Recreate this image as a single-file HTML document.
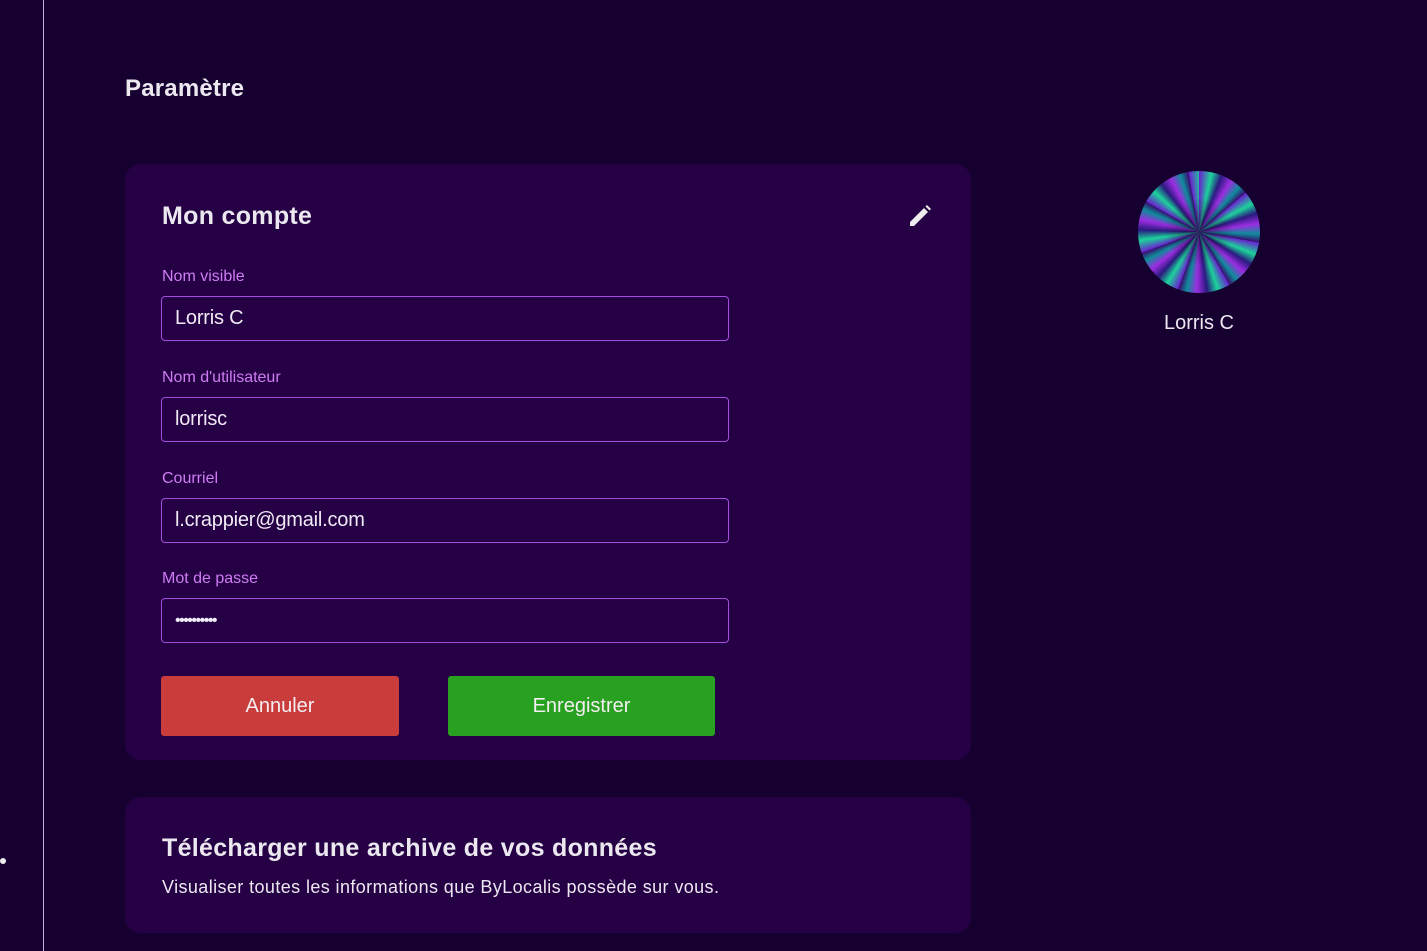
<!DOCTYPE html>
<html><head><meta charset="utf-8"><style>
*{box-sizing:border-box;margin:0;padding:0}
body{width:1427px;height:951px;background:#150030;font-family:"Liberation Sans",Arial,sans-serif;position:relative;overflow:hidden;color:#eee}
.line{position:absolute;left:43px;top:0;width:1px;height:951px;background:#c9a6e6}
.dot{position:absolute;left:0;top:858px;width:6px;height:6px;border-radius:50%;background:#eee}
h1{position:absolute;left:125px;top:75px;font-size:24px;font-weight:bold;color:#ece8f0;letter-spacing:0.2px}
.card{position:absolute;left:125px;background:#250045;border-radius:16px;width:846px}
.c1{top:164px;height:596px}
.c2{top:797px;height:136px}
h2{position:absolute;left:37px;font-size:25px;font-weight:bold;color:#ece8f0;letter-spacing:0.3px}
label{position:absolute;left:37px;font-size:16px;color:#d07cf5}
.in{position:absolute;left:36px;width:568px;height:45px;border:1px solid #a44be0;border-radius:4px;font-size:20px;padding:0 13px;line-height:43px;color:#f0eaf4;letter-spacing:-0.2px}
.btn{position:absolute;top:512px;height:60px;border-radius:3px;font-size:20px;color:#f4eef2;text-align:center;line-height:60px}
.av{position:absolute;left:1138px;top:171px;width:122px;height:122px;border-radius:50%;
background:repeating-conic-gradient(from 0deg at 50% 50%,#6a1fd0 0deg,#1bd39a 12deg,#2a1a80 22deg,#9b2ce0 32deg,#0e8c9a 42deg,#3a0b70 50deg)}
.av:after{content:"";position:absolute;inset:0;border-radius:50%;background:radial-gradient(circle,rgba(20,0,40,.6) 0,rgba(20,0,40,0) 40%)}
</style></head><body>
<div class="line"></div><div class="dot"></div>
<h1>Paramètre</h1>
<div class="card c1">
<h2 style="top:38px">Mon compte</h2>
<svg style="position:absolute;left:782px;top:39px" width="26" height="26" viewBox="0 0 26 26"><path d="M3 19 L17 5 L21 9 L7 23 L3 23 Z" fill="#eee"/><path d="M18.5 3.5 L20 2 L24 6 L22.5 7.5 Z" fill="#eee"/></svg>
<label style="top:104px">Nom visible</label>
<div class="in" style="top:132px">Lorris C</div>
<label style="top:205px">Nom d'utilisateur</label>
<div class="in" style="top:233px">lorrisc</div>
<label style="top:306px">Courriel</label>
<div class="in" style="top:334px">l.crappier@gmail.com</div>
<label style="top:406px">Mot de passe</label>
<div class="in" style="top:434px;font-size:16px;letter-spacing:-1.5px">••••••••••</div>
<div class="btn" style="left:36px;width:238px;background:#c93c3c">Annuler</div>
<div class="btn" style="left:323px;width:267px;background:#28a020">Enregistrer</div>
</div>
<div class="card c2">
<h2 style="top:37px">Télécharger une archive de vos données</h2>
<div style="position:absolute;left:37px;top:80px;font-size:18px;color:#ece8f0;letter-spacing:0.4px">Visualiser toutes les informations que ByLocalis possède sur vous.</div>
</div>
<div class="av"></div>
<div style="position:absolute;left:1138px;width:122px;top:312px;text-align:center;font-size:20px;color:#ece8f0">Lorris C</div>
</body></html>
